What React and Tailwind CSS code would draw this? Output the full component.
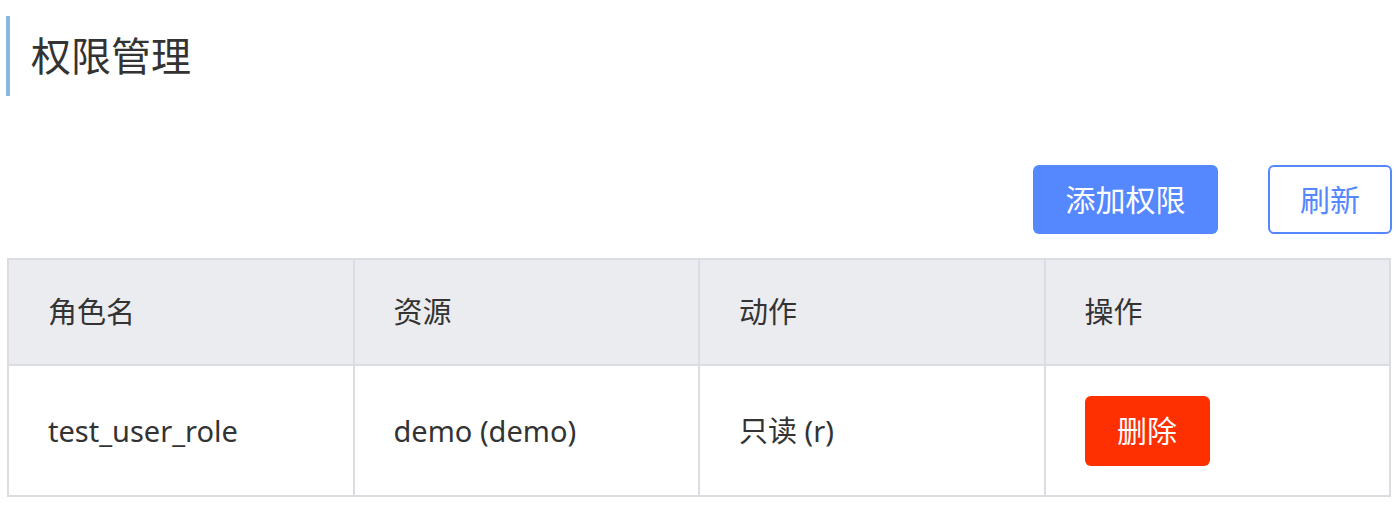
const font = { fontFamily: '"Noto Sans", "Noto Sans CJK SC", sans-serif' };

const rows = [
  { role: 'test_user_role', resource: 'demo (demo)', action: '只读 (r)' },
];

export default function App() {
  return (
    <div className="bg-white w-[1398px] h-[513px] text-[#333]" style={font}>
      <div className="pt-4 pl-[6px]">
        <div className="flex items-center h-[80px] border-l-4 border-[#88b8e2] pl-[21px]">
          <h1 className="text-[40px] leading-none">权限管理</h1>
        </div>
      </div>

      <div className="flex justify-end gap-[50px] pr-[6px] mt-[69px]">
        <button className="h-[69px] w-[185px] rounded-md bg-[#5587ff] text-white text-[30px] leading-none">
          添加权限
        </button>
        <button className="h-[69px] w-[124px] rounded-md border-2 border-[#5587ff] bg-white text-[#5587ff] text-[30px] leading-none">
          刷新
        </button>
      </div>

      <div className="px-[7px] mt-[24px]">
        <table className="w-full table-fixed border-collapse border-2 border-[#dcdde2]">
          <thead>
            <tr className="bg-[#ebecf0] h-[106px]">
              {['角色名', '资源', '动作', '操作'].map((h, i) => (
                <th key={i} className="border-2 border-[#dcdde2] text-left font-normal pl-[39px] text-[29px]">
                  {h}
                </th>
              ))}
            </tr>
          </thead>
          <tbody>
            {rows.map((r, i) => (
              <tr key={i} className="h-[131px]">
                <td className="border-2 border-[#dcdde2] pl-[39px] text-[29px]">{r.role}</td>
                <td className="border-2 border-[#dcdde2] pl-[39px] text-[29px]">{r.resource}</td>
                <td className="border-2 border-[#dcdde2] pl-[39px] text-[29px]">{r.action}</td>
                <td className="border-2 border-[#dcdde2] pl-[39px]">
                  <button className="h-[70px] w-[125px] rounded-md bg-[#ff3000] text-white text-[30px] leading-none">
                    删除
                  </button>
                </td>
              </tr>
            ))}
          </tbody>
        </table>
      </div>
    </div>
  );
}
